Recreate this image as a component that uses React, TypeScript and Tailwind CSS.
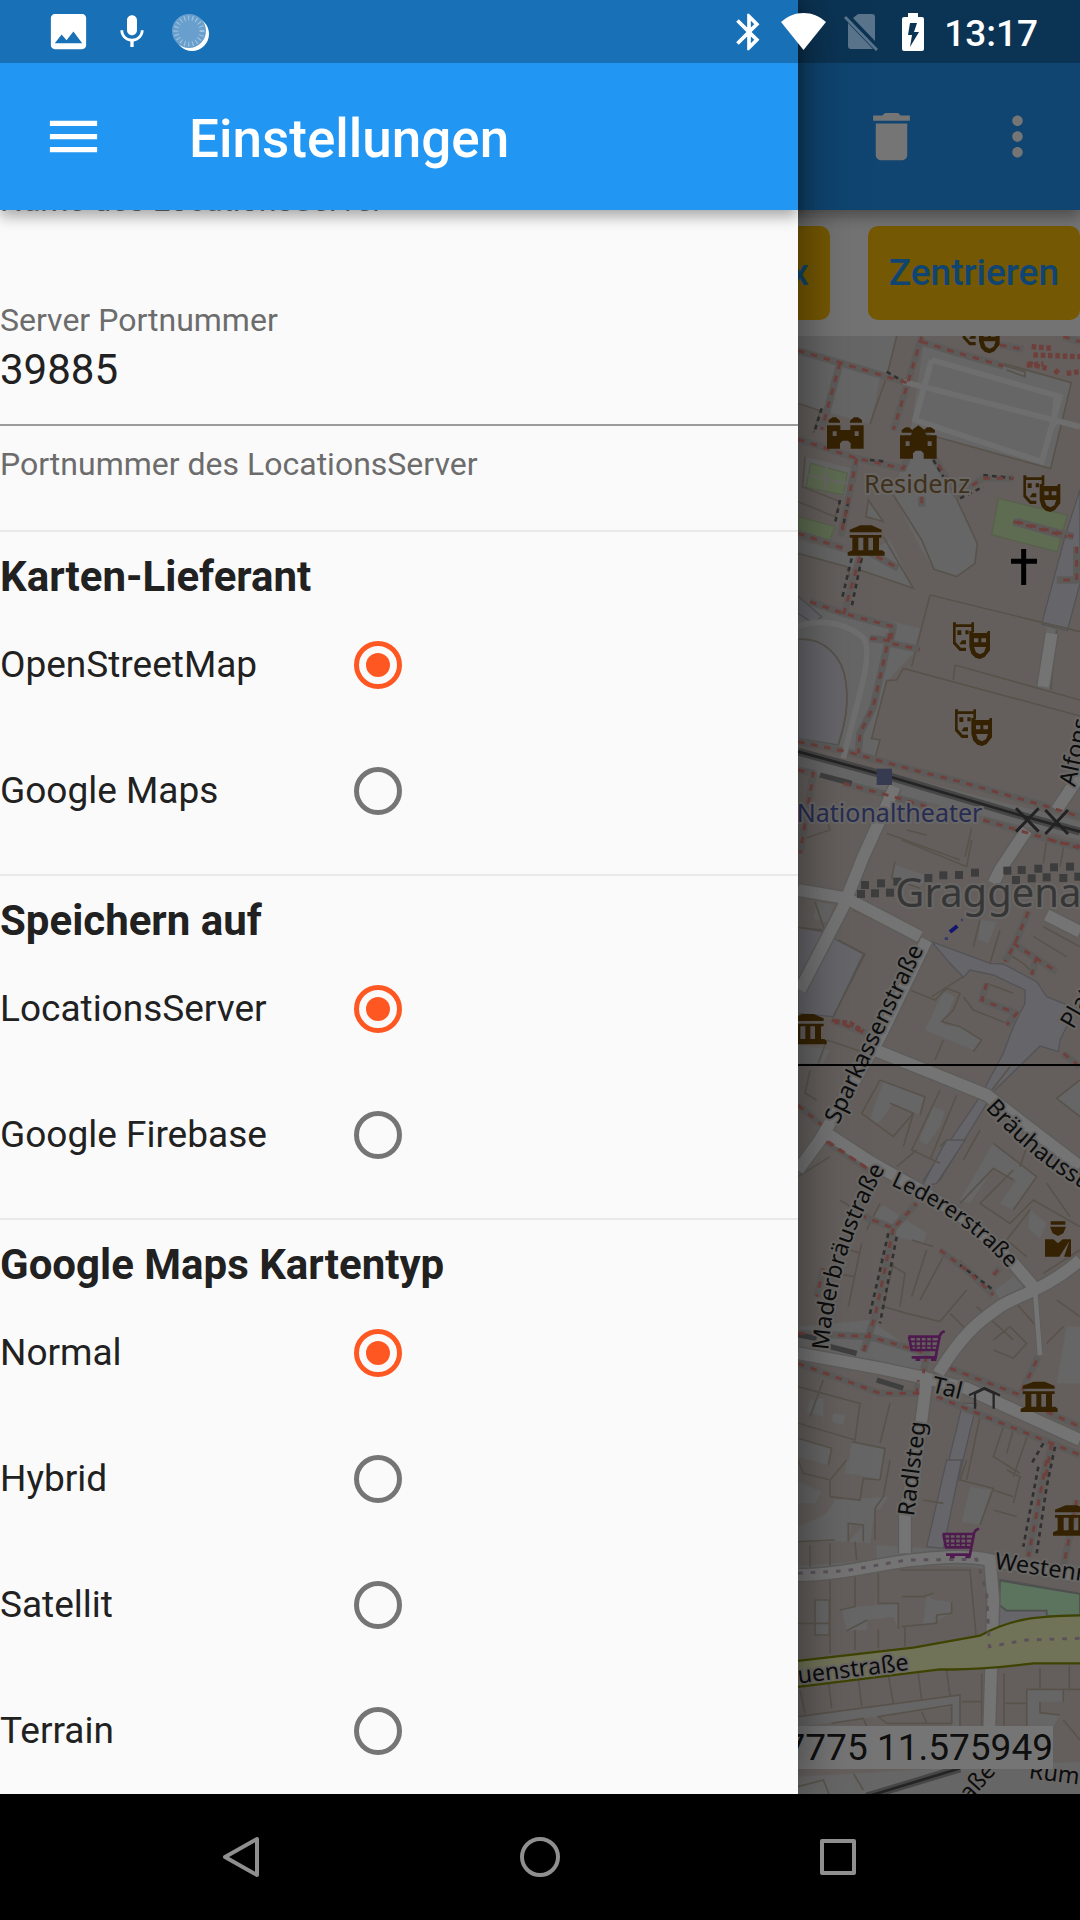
import { useState } from "react";
import type { ReactNode } from "react";
import { MdBluetooth, MdDelete, MdImage, MdMenu, MdMic, MdMoreVert } from "react-icons/md";

/* ---------- Map data: [vertical offset of the tile, path] ---------- */

type Shape = [number, string];

const courtyards: Shape[] = [
  [0, "M54 408H350L322 520L300 535L270 672L130 632L54 610Z"],
  [0, "M430 440L874 548L812 806L392 690Z"],
  [0, "M380 750H440L480 790L592 1030L585 1090L530 1130L462 1108L425 1050L340 885Z"],
  [0, "M80 772L215 805L200 890L68 860Z"],
  [0, "M265 900L310 965L258 950Z"],
  [960, "M54 60L240 110L330 60L400 205L240 150L54 100Z"],
  [960, "M54 240L420 325L400 400L320 485L275 655L300 660L290 715L54 655Z"],
  [960, "M54 690L900 905V960L54 750Z"],
  [960, "M830 330L812 510L775 500L800 320Z"],
  [1920, "M345 75L450 110L420 140L335 110ZM110 185L160 195L150 250L100 235ZM600 240L650 245L625 310L595 300Z"],
  [1920, "M490 455L525 470L490 555L540 560L605 600L585 632L435 570Z"],
  [1920, "M310 725L435 775L420 825L340 790L295 850L270 838Z"],
  [1920, "M460 800L495 815L480 860L440 915L418 900ZM54 615L150 630L130 670H54Z"],
  [1920, "M640 910L770 1010L700 1110L660 1090L710 1020L640 985L570 1090L540 1080ZM900 720L830 775L900 830Z"],
  [2820, "M310 195L440 280L430 312L350 290L270 235ZM490 320L520 345L480 340ZM750 210L800 250L780 295L745 265Z"],
  [2820, "M270 540L54 560V640L430 710L440 660ZM645 450L700 410L730 440L660 480ZM860 560H900V730H830Z"],
  [2820, "M90 780L130 775V830L80 815ZM160 820L195 825L190 855L155 845ZM54 895L155 925L145 975L54 950ZM215 905L315 925L300 1020L205 985Z"],
  [3780, "M200 0H310L290 55L195 40ZM54 65L125 95L105 130H54ZM165 120L325 110L300 150L285 145L270 250L205 245L250 195L215 190L205 245H54V200L105 178L140 160Z"],
  [3780, "M570 80L632 90L600 195L545 185ZM105 420H148V525H105ZM185 445L355 430V508L340 470L262 480L260 510L200 512ZM440 405L462 420L512 425L515 460L450 492H430Z"],
  [3780, "M54 770L540 705V800H515V740L54 800ZM740 690H850V725H780V760L840 765L820 800H740ZM54 950L400 930L900 905V1020H54Z"],
  [3780, "M290 255L600 275L650 330L570 320L380 315L54 350V318L290 300Z"],
];

const plazas: Shape[] = [
  [0, "M900 868L855 1010L785 1272L862 1292L900 1150Z"],
  [960, "M54 358C130 350 190 410 198 490C206 560 195 610 175 675L54 655ZM54 228L125 290L100 310L54 280Z"],
  [1920, "M54 262L135 270L170 300L250 342L160 530L54 520Z"],
  [1920, "M455 305L630 370L670 372L770 425L800 470L850 490L890 500L840 600L835 635L780 618L645 750L480 1020H430L600 770L670 640L700 560L735 490V450L640 405L570 390L550 412L510 370Z"],
  [2820, "M500 0H555L470 130L425 140ZM548 790H590L535 1020H492Z"],
  [3780, "M500 0H545L490 265L440 260ZM645 355L900 400V470L740 478L645 520Z"],
];

const parks: Shape[] = [
  [0, "M92 790L202 820L190 885L78 862ZM54 950L165 980L150 1020L54 995ZM655 895L862 945L832 1056L635 1004Z"],
];

const outlines: Shape[] = [
  [0, "M350 408L320 530L270 672M54 610L120 632L100 700M440 425L874 548L812 806L395 690M340 885L425 1020L462 1108L530 1130L585 1090L592 1030L480 790M75 770L68 860L180 905L165 950L54 905"],
  [0, "M265 900L310 965L258 950ZM440 430L735 515V530L680 510"],
  [960, "M54 100L200 140L210 170M240 150L400 205L310 50M450 225L900 335M450 225L395 440M370 445L900 588M370 445L350 480L320 482L275 655L300 660L285 715M525 435L900 540M525 435L520 480M830 330L812 510M54 358C130 350 190 410 198 490C206 560 195 610 175 675"],
  [960, "M320 940L540 1020M380 930L440 945M575 925L555 1010M60 960L150 930L130 860"],
  [1920, "M365 0L560 80L575 0M345 65L335 115L420 145M175 300L255 342L160 530M54 262L135 275L105 185M220 210L390 285M800 0L790 70M855 0L840 80M790 260L900 320M760 290L860 350M600 240L580 320M660 270L630 370"],
  [1920, "M410 400L390 450L465 480L500 445L540 460L520 510L485 545L540 560L605 600L580 635M550 470L580 510L680 550M465 660L490 600M455 470L550 410M140 600L260 640M140 600L115 670M300 720L435 770L420 825M300 720L245 820L340 890L400 820L330 790M400 820L370 920M480 750L395 930L480 970M530 765L450 960M90 690L75 760L110 780M600 870L550 960M740 920L720 980"],
  [1920, "M690 345L730 370L760 400M620 430L700 460M690 680L620 770M640 910L770 1010L700 1110M540 1090L640 985L700 1020M900 720L830 775L900 830"],
  [2820, "M54 110L150 50M300 190L260 270M180 180L235 215M245 310L205 500M180 320L240 340M165 400L225 410M340 370L310 500L380 520L480 545L560 450M300 355L375 400L360 500M440 330L395 470M395 300L460 320M490 350L420 480M540 360L610 440M590 500L700 600M510 520L570 580M640 600L690 560L740 610L700 655L640 630M700 480L770 560M830 480L900 530M800 610L850 560"],
  [2820, "M500 0L480 20M410 30L350 80M700 90L600 190L690 250L760 180L900 260M750 210L680 300L740 350M790 400L900 330M800 130L870 230M54 740L240 790L225 900L54 850M130 720L90 830M215 905L315 925L300 1020M330 790L300 910M54 895L155 925L145 975M640 850L670 860L640 950L720 1000M745 880L700 1010M700 870L680 940M600 830L560 1020"],
  [3780, "M54 0L70 40L150 60V110L240 120L250 55L300 60M150 60L200 0M330 0L310 110L285 145V240M54 245L165 240M90 255V320M150 250V320M225 245L230 300M205 245V190L250 195V245M430 120L490 130M560 0L540 60L640 85L600 195M680 30L720 50L700 130M640 90L700 110M640 150L710 170"],
  [3780, "M150 360V580M225 350V440L180 450M295 340V430L355 430V508M360 330H570L588 525M54 490H150M365 410H430L460 400M105 420H148V525H105ZM200 512L262 480M365 500L470 490V465L515 460V425M225 510V570M295 508V565M375 500V560"],
  [3780, "M60 690L75 760M145 660L155 745M235 655L245 740M325 645L340 730M415 640L425 720M500 630L510 708M54 770L540 705V800M155 790L250 775L260 800M295 770L515 735V790L320 790ZM425 755L440 790M605 640V800M545 725H605M672 640V840M672 730H740M780 625V688M740 688H900M740 688V800M868 615V690M780 725V758L840 765M672 835H740M850 690V725M54 980L130 960L150 1010M220 940L250 990M850 780L900 840"],
];

const streets: Shape[] = [
  [0, "M370 545L900 680"],
  [0, "M455 480L840 590L785 785L405 660L455 480M830 590L820 680"],
  [960, "M190 715L245 500C262 430 270 360 240 345C180 300 100 300 54 320"],
];

const roads: Shape[] = [
  [960, "M345 800L250 1010L190 1160L60 1410M900 765L830 870M740 930L660 1050L640 1090M815 340L790 500"],
  [1920, "M54 150L200 175L420 290M800 225L900 275"],
  [1920, "M440 300L300 590L120 900L54 990M285 630L460 700L620 765L900 980M140 880L270 965L420 1050L560 1140L700 1270L760 1340"],
  [2820, "M54 640L300 685L440 715L560 745L900 900M475 700C560 560 620 530 660 500S800 450 900 360"],
  [2820, "M440 720L405 990L375 1110V1240"],
  [3780, "M54 345C180 345 300 310 400 300S560 285 630 300L640 420L628 800M630 300L900 350"],
];

const rails: Shape[] = [
  [960, "M54 695L330 770L700 880L900 935"],
  [3780, "M260 1010L540 925"],
];

const footways: Shape[] = [
  [0, "M54 452L180 488L380 548M180 488L125 690M54 718L230 775L370 806L400 720M230 775L185 1000L190 960M425 410L380 560L340 690M425 425L520 455L670 498M660 435L730 448M455 760L530 885L610 835H700M700 965L860 1010M850 410L900 425M425 890V920"],
  [960, "M54 40L190 85M255 90L355 145M240 110L190 285M90 245L190 280L340 320L330 370L420 388M330 340L280 560L240 640L235 700M54 665L200 695L400 750L540 785L820 865L900 890M54 750L100 760L60 1000M190 790L340 830L440 860M610 900L900 985M710 5L880 50M890 80V180L830 180M270 355L330 362"],
  [1920, "M745 215L705 310L675 365M700 310L830 395M770 350L755 405M620 430L605 480L710 520L680 555M155 540L260 580M54 795L125 855M140 905L270 990M850 640L900 680M810 0L900 20"],
  [2820, "M145 5L260 85M240 225L340 265L410 190M340 265L285 530L250 635M54 580L270 590L440 640L430 700M54 670L300 760H420M410 765L415 720M480 330L560 390L640 465M640 405L660 385M510 685L720 765L775 650M470 770L900 945M800 815L900 860M815 910L795 1020M130 385L110 470"],
  [3780, "M800 0L745 290M890 120L850 320"],
];

const denseFootways: Shape[] = [
  [0, "M745 490L800 505M755 440L815 445M760 465L900 470M740 495L790 492M860 520L900 515M825 510L835 520"],
  [1920, "M165 545L210 550L250 575"],
];

const softPaths: Shape[] = [
  [3780, "M54 340L200 332L380 300L590 298L620 400L628 560L740 540L900 535"],
];

const borderSquares: [number, number][] = [
  [255, 135], [303, 130], [243, 162], [285, 160], [330, 158], [352, 125], [445, 114], [490, 106], [537, 105],
  [585, 98], [682, 92], [725, 90], [775, 86], [822, 82], [870, 80], [708, 120], [755, 115], [800, 112], [850, 114], [895, 110],
];

function Shapes({ items, ...rest }: { items: Shape[] } & React.SVGProps<SVGPathElement>) {
  return (
    <>
      {items.map(([dy, d], i) => (
        <path key={i} d={d} transform={`translate(0 ${dy})`} {...rest} />
      ))}
    </>
  );
}

/* ---------- Map symbols, centred on their own origin ---------- */

function Museum({ x, y }: { x: number; y: number }) {
  return (
    <path
      transform={`translate(${x} ${y})`}
      fill="#734a08"
      d="M-48 -32L-16 -45H18L48 -32V-24H-48ZM-48 -16H48V-8H40V30H50L57 36V46H-54V36L-40 30V-8H-48ZM-22 -8V30H-7V-8ZM8 -8V30H22V-8Z"
      fillRule="evenodd"
    />
  );
}

function Masks({ x, y }: { x: number; y: number }) {
  return (
    <g transform={`translate(${x} ${y})`} fill="#734a08" fillRule="evenodd">
      <path d="M-55 -54H-46V-48H0V-54H8V-25H0V-40H-47V5L-32 22H-16V32H-35L-55 10ZM-42 -30H-30V-16H-42ZM-18 -30H-8V-18H-18ZM-36 12L-28 0H-16V12Z" />
      <path d="M-6 -28H0L8 -22H46L50 -28H56V30L40 50L26 56L12 52L0 40L-6 20ZM8 -6V6H21V-6ZM30 -6V6H44V-6ZM8 20L14 36L26 42L38 36L44 20Z" />
    </g>
  );
}

function Castle({ x, y, peak }: { x: number; y: number; peak?: boolean }) {
  return (
    <g transform={`translate(${x} ${y})`} fill="#734a08">
      <path
        fillRule="evenodd"
        d="M-55 -24H-15V-10H15V-24H55V46H16V30L8 22H-8L-16 30V46H-55ZM-38 -6V8H-26V-6ZM28 -6V8H40V-6Z"
      />
      <path d="M-50 -32V-40L-38 -48H-28L-16 -38V-32ZM14 -32V-38L26 -48H38L50 -40V-32Z" />
      {peak && <path d="M-22 -24L-16 -42L0 -54L16 -42L24 -24V0H-22Z" />}
    </g>
  );
}

function Cart({ x, y }: { x: number; y: number }) {
  return (
    <g transform={`translate(${x} ${y})`} fill="none" stroke="#ac39ac">
      <path strokeWidth="8" d="M-52 -28H40L48 -40L57 -44M-50 -28L-42 12H34L42 -28M34 12L30 34H-42" />
      <path strokeWidth="5" d="M-30 -28V12M-14 -28V12M2 -28V12M18 -28V12M-48 -14H38M-46 0H36" />
      <path strokeWidth="10" d="M-30 40H-16M16 40H32" />
    </g>
  );
}

function CityMap() {
  return (
    <svg
      className="absolute inset-0 h-full w-full"
      viewBox="0 336 1080 1458"
      preserveAspectRatio="xMaxYMid slice"
      role="img"
      aria-label="Stadtplan"
    >
      <rect y="336" width="1080" height="1458" fill="#d9d0c9" />
      <g transform="translate(780 200) scale(0.33333)" fontFamily='"Noto Sans", "Open Sans", sans-serif'>
        <Shapes items={courtyards} fill="#dedede" />
        <Shapes items={plazas} fill="#dddde8" stroke="#b5b3b8" strokeWidth="4" />
        <Shapes items={parks} fill="#cdebb0" stroke="#bfd2a6" strokeWidth="4" />
        <path d="M660 4142L900 4182V4245L800 4248V4232H680L658 4215Z" fill="#c8facc" stroke="#a8aca9" strokeWidth="5" />
        <Shapes items={outlines} fill="none" stroke="#bfb3a3" strokeWidth="5" />
        <path d="M140 790L135 870M85 825L198 850" stroke="#dfe0d6" strokeWidth="8" />

        <Shapes items={footways} fill="none" stroke="#c9c6c4" strokeWidth="22" strokeLinejoin="round" />
        <Shapes items={streets} fill="none" stroke="#f0f0f0" strokeWidth="17" />
        <Shapes items={roads} fill="none" stroke="#cbc8c6" strokeWidth="44" strokeLinejoin="round" />
        <path d="M765 3280L780 3460" stroke="#cbc8c6" strokeWidth="20" />
        <Shapes items={roads} fill="none" stroke="#fdfdfd" strokeWidth="35" strokeLinejoin="round" />
        <path d="M765 3270L780 3465" stroke="#fdfdfd" strokeWidth="14" />
        <path
          d="M40 4384L400 4343L600 4307C700 4252 780 4248 910 4246V4390H760C640 4405 560 4411 480 4408L40 4462Z"
          fill="#f7fabf"
          stroke="#899306"
          strokeWidth="7"
        />
        <Shapes items={rails} fill="none" stroke="#989898" strokeWidth="24" />
        <Shapes items={rails} fill="none" stroke="#4f4f4f" strokeWidth="8" />
        <path d="M120 1725L215 1750M54 3405L110 3415M150 3440L230 3460M290 3540L370 3565" stroke="#8a8a8a" strokeWidth="16" />
        <path
          d="M320 515L370 545M125 625L105 690M180 900L165 970M205 905L190 975M270 780L320 785M460 780L490 830M540 895L610 860M610 825L700 835M245 1075L215 1220M215 1075L185 1200M325 3100L268 3350M350 3110L300 3370M540 3195L640 3270M790 3730L755 3790M825 3740L800 3860L770 4060M775 3800L730 4040"
          stroke="#6a6a6a"
          strokeWidth="8"
          strokeDasharray="14 12"
          fill="none"
        />
        <Shapes items={footways} fill="none" stroke="#f08a80" strokeWidth="9" strokeDasharray="20 20" />
        <Shapes items={denseFootways} fill="none" stroke="#f08a80" strokeWidth="16" strokeDasharray="14 8" />
        <Shapes items={softPaths} fill="none" stroke="#c6b0c6" strokeWidth="9" strokeDasharray="14 24" />
        {borderSquares.map(([x, y]) => (
          <rect key={`${x}-${y}`} x={x - 12} y={y + 1908} width="24" height="24" fill="#858585" />
        ))}
        <path d="M510 2196L532 2178" stroke="#2a30f0" strokeWidth="12" />
        <path d="M494 2216H504M543 2160H548" stroke="#7478e0" strokeWidth="8" />

        <path d="M290 1706H336V1755H290Z" fill="#7981b0" />
        <path d="M708 1825L776 1895M776 1825L708 1895M796 1830L864 1902M864 1830L796 1902" stroke="#4a4a4a" strokeWidth="9" />
        <path d="M731 1047V1155M693 1084H771" stroke="#000" strokeWidth="15" />

        <Castle x={196} y={700} />
        <Castle x={415} y={730} peak />
        <Masks x={603} y={404} />
        <Masks x={785} y={880} />
        <Masks x={574} y={1321} />
        <Masks x={580} y={1582} />
        <Museum x={257} y={1021} />
        <Museum x={83} y={2487} />
        <Museum x={776} y={3590} />
        <Museum x={873} y={3961} />
        <Cart x={437} y={3438} />
        <Cart x={540} y={4030} />
        <path d="M585 3626V3580L613 3566L641 3580V3626M567 3586L613 3564L660 3586" fill="none" stroke="#555" strokeWidth="7" />
        <path d="M812 3064H856V3074H812ZM810 3080H858L850 3100L834 3108L818 3100ZM795 3118H820L834 3130L848 3118H873V3170H852L868 3124L838 3170H795Z" fill="#734a08" />

        <g stroke="#e4e0dc" strokeWidth="12" strokeLinejoin="round" paintOrder="stroke">
          <text x="252" y="878" fontSize="76" fill="#8a6b42">Residenz</text>
          <text x="607" y="1865" fontSize="75" textAnchor="end" fill="#5560b5">Nationaltheater</text>
          <text x="346" y="2122" fontSize="120" fill="#777">Graggenau</text>
          <g fill="#1c1c1c" fontSize="70">
            <path id="spark" d="M175 2775L303 2510L443 2225" fill="none" stroke="none" />
            <text><textPath href="#spark">Sparkassenstraße</textPath></text>
            <path id="brau" d="M615 2725C720 2840 800 2910 1000 3020" fill="none" stroke="none" />
            <text><textPath href="#brau">Bräuhausstraße</textPath></text>
            <path id="leder" d="M332 2955C450 3010 600 3090 720 3250" fill="none" stroke="none" />
            <text fontSize="66"><textPath href="#leder">Ledererstraße</textPath></text>
            <path id="mader" d="M145 3452C165 3240 210 3090 330 2880" fill="none" stroke="none" />
            <text><textPath href="#mader">Maderbräustraße</textPath></text>
            <text transform="translate(402 3950) rotate(-83)">Radlsteg</text>
            <text transform="translate(452 3576) rotate(14)">Tal</text>
            <text transform="translate(642 4106) rotate(8)">Westenriederstraße</text>
            <text transform="translate(388 4410) rotate(-7)" textAnchor="end">Frauenstraße</text>
            <text transform="translate(885 1762) rotate(-78)">Alfons</text>
            <text transform="translate(880 2490) rotate(-60)">Platzl</text>
            <text transform="translate(650 4715) rotate(-48)" textAnchor="end">straße</text>
            <text transform="translate(745 4735) rotate(7)">Rumfordstraße</text>
          </g>
        </g>
      </g>
    </svg>
  );
}

/* ---------- Status bar ---------- */

function StatusBar() {
  return (
    <div className="absolute inset-x-0 top-0 flex h-[63px] items-center justify-between bg-black/25 pr-[42px] pl-[45px] text-white">
      <div className="flex items-center gap-[20px]">
        <MdImage size={47} />
        <MdMic size={40} />
        <svg width="37" height="38" viewBox="0 0 37 38">
          <circle cx="20" cy="21" r="17" fill="#fff" />
          <circle cx="17" cy="18" r="17" fill="#699fcd" />
          <circle cx="17" cy="18" r="13" fill="none" stroke="#a3c5e2" strokeWidth="5" strokeDasharray="1 3" />
        </svg>
      </div>
      <div className="flex items-center gap-[14px]">
        <div className="flex items-center gap-[18px]">
          <MdBluetooth size={44} className="-mx-2" />
          <svg width="45" height="37" viewBox="0 0 45 37" fill="currentColor">
            <path d="M22.500 37L0 9C7 3 14 0 22.500 0S38 3 45 9Z" />
          </svg>
          <svg width="34" height="38" viewBox="0 0 34 38" className="text-[#59738a]">
            <path fill="currentColor" d="M14 1H28Q31 1 31 4V28L9 5ZM4 10L29 36H7Q4 36 4 33Z" />
            <path stroke="currentColor" strokeWidth="3" d="M1 4L33 37" />
          </svg>
          <svg width="34" height="38" viewBox="0 0 34 38">
            <path
              fill="currentColor"
              fillRule="evenodd"
              d="M12 0H22V4H26Q28 4 28 6V36Q28 38 26 38H8Q6 38 6 36V6Q6 4 8 4H12ZM14 10L12 22H16L14 34L23 19H18L21 10Z"
            />
          </svg>
        </div>
        <span className="pt-1 text-[37px] leading-[42px] font-medium">13:17</span>
      </div>
    </div>
  );
}

/* ---------- Page behind the drawer ---------- */

function MapPage() {
  return (
    <main className="flex flex-1 flex-col">
      <header className="relative z-10 bg-[#2196f3] pt-[63px] text-white shadow-[0_6px_14px_rgba(0,0,0,0.35)]">
        <div className="flex h-[147px] justify-end">
          <button aria-label="Löschen" className="flex w-[126px] items-center justify-center">
            <MdDelete size={63} />
          </button>
          <button aria-label="Mehr" className="flex w-[126px] items-center justify-center">
            <MdMoreVert size={63} />
          </button>
        </div>
      </header>
      <div className="flex h-[126px] items-center justify-end gap-[38px] bg-[#fafafa] text-[37px] leading-[42px] font-medium text-[#2196f3]">
        <button className="h-[94px] rounded-[10px] bg-[#ffc107] px-[21px]">Fix</button>
        <button className="h-[94px] rounded-[10px] bg-[#ffc107] px-[21px]">Zentrieren</button>
      </div>
      <div className="relative flex-1 overflow-hidden">
        <CityMap />
        <div className="absolute inset-x-0 top-1/2 -mt-px h-[2px] bg-black" />
        <p className="absolute right-[27px] bottom-[25px] bg-white text-[37px] leading-[43px] text-[#212121]">
          48.137775 11.575949
        </p>
      </div>
    </main>
  );
}

/* ---------- Drawer ---------- */

function Divider() {
  return (
    <div className="flex h-[42px] shrink-0 items-center">
      <hr className="h-[2px] w-full border-0 bg-[#e9e9e9]" />
    </div>
  );
}

function RadioGroup({ title, name, options }: { title: string; name: string; options: string[] }) {
  const [selected, setSelected] = useState(options[0]);
  return (
    <>
      <Divider />
      <fieldset className="shrink-0">
        <legend className="h-[50px] text-[42px] leading-[50px] font-bold">{title}</legend>
        {options.map((option) => (
          <label key={option} className="flex h-[126px] items-center text-[37px] leading-[42px]">
            <span className="w-[315px]">{option}</span>
            <span className="flex w-[126px] justify-center">
              <input
                type="radio"
                name={name}
                checked={selected === option}
                onChange={() => setSelected(option)}
                className="grid size-[48px] appearance-none place-items-center rounded-full border-[5px] border-[#757575] before:size-[24px] before:rounded-full checked:border-[#ff5722] checked:before:bg-[#ff5722]"
              />
            </span>
          </label>
        ))}
      </fieldset>
    </>
  );
}

function HelperText({ children, id }: { children: ReactNode; id?: string }) {
  return (
    <p id={id} className="shrink-0 text-[32px] leading-[36px] text-[#6c6c6c]">
      {children}
    </p>
  );
}

function SettingsDrawer() {
  return (
    <aside className="absolute inset-y-0 left-0 z-20 flex w-[798px] max-w-full flex-col bg-[#fafafa] text-[#212121] shadow-[0_0_50px_rgba(0,0,0,0.5)]">
      <header className="relative z-10 bg-[#2196f3] pt-[63px] text-white shadow-[0_6px_14px_rgba(0,0,0,0.35)]">
        <div className="flex h-[147px] items-center">
          <button aria-label="Menü schließen" className="flex w-[147px] justify-center">
            <MdMenu size={63} />
          </button>
          <h1 className="pt-1 pl-[42px] text-[53px] leading-[60px] font-medium">Einstellungen</h1>
        </div>
      </header>
      <div className="flex min-h-0 flex-1 flex-col justify-end overflow-hidden">
        <HelperText>Name des LocationsServer</HelperText>
        <div className="flex shrink-0 flex-col pt-[84px] pb-[28px]">
          <label htmlFor="port" className="text-[32px] leading-[36px] text-[#6c6c6c]">
            Server Portnummer
          </label>
          <input
            id="port"
            defaultValue="39885"
            inputMode="numeric"
            aria-describedby="port-hint"
            className="mb-[20px] h-[88px] w-full border-b-[2px] border-[#9b9b9b] pt-[7px] pb-[30px] text-[42px] leading-[50px] outline-none"
          />
          <HelperText id="port-hint">Portnummer des LocationsServer</HelperText>
        </div>
        <RadioGroup title="Karten-Lieferant" name="provider" options={["OpenStreetMap", "Google Maps"]} />
        <RadioGroup title="Speichern auf" name="storage" options={["LocationsServer", "Google Firebase"]} />
        <RadioGroup
          title="Google Maps Kartentyp"
          name="maptype"
          options={["Normal", "Hybrid", "Satellit", "Terrain"]}
        />
      </div>
    </aside>
  );
}

/* ---------- Navigation bar ---------- */

function NavigationBar() {
  return (
    <nav className="grid h-[126px] grid-cols-3 bg-black px-[93px] text-[#8f8f8f]">
      <button aria-label="Zurück" className="flex items-center justify-center">
        <svg width="42" height="42" viewBox="0 0 42 42" fill="none" stroke="currentColor" strokeWidth="4" strokeLinejoin="round">
          <path d="M36 3V39L4 21Z" />
        </svg>
      </button>
      <button aria-label="Startseite" className="flex items-center justify-center">
        <svg width="42" height="42" viewBox="0 0 42 42" fill="none" stroke="currentColor" strokeWidth="4">
          <circle cx="21" cy="21" r="18" />
        </svg>
      </button>
      <button aria-label="Übersicht" className="flex items-center justify-center">
        <svg width="42" height="42" viewBox="0 0 42 42" fill="none" stroke="currentColor" strokeWidth="4" strokeLinejoin="round">
          <path d="M5 5H37V37H5Z" />
        </svg>
      </button>
    </nav>
  );
}

export default function App() {
  return (
    <div className="flex min-h-screen flex-col bg-black font-[Roboto,sans-serif]">
      <div className="relative flex flex-1 flex-col overflow-hidden">
        <MapPage />
        <div className="absolute inset-0 z-10 bg-black/54" />
        <SettingsDrawer />
        <div className="absolute inset-x-0 top-0 z-30">
          <StatusBar />
        </div>
      </div>
      <NavigationBar />
    </div>
  );
}
